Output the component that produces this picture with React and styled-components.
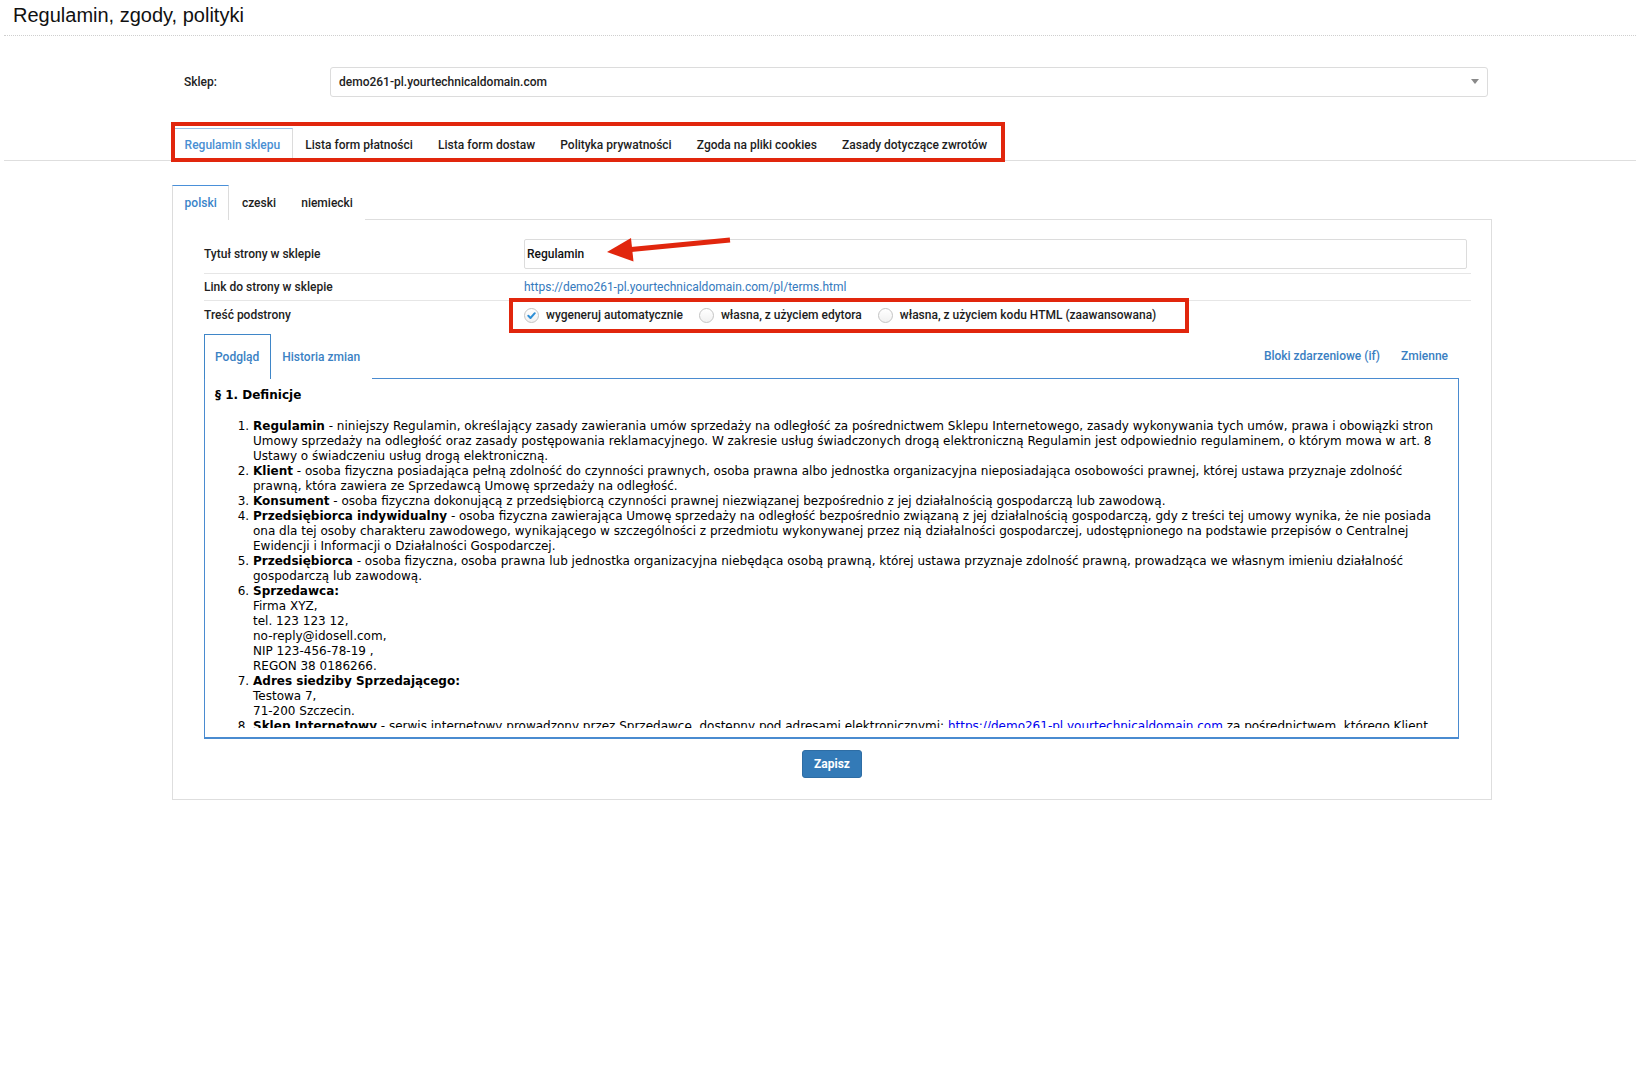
import React from 'react';
import styled, { createGlobalStyle } from 'styled-components';

const GlobalStyle = createGlobalStyle`
  * { box-sizing: border-box; }
  html, body { margin: 0; padding: 0; background: #fff; }
  body {
    font-family: Roboto, "Liberation Sans", Arial, sans-serif;
    font-size: 12px;
    color: #222;
  }
`;

const RED = '#e1260d';

const Page = styled.div`
  padding-left: 4px;
  padding-bottom: 40px;
`;

const Header = styled.header`
  height: 36px;
  border-bottom: 1px dotted #cfcfcf;
  padding-left: 9px;
`;

const Title = styled.h1`
  margin: 0;
  font-family: "Liberation Sans", Arial, sans-serif;
  font-size: 20px;
  font-weight: 400;
  line-height: 30px;
  color: #111;
`;

const Section = styled.div`
  margin-left: 168px;
  width: 1320px;
`;

const ShopRow = styled.div`
  margin-top: 31px;
  height: 30px;
  display: flex;
  align-items: center;
`;

const ShopLabel = styled.div`
  width: 158px;
  padding-left: 12px;
  font-weight: 500;
`;

const Select = styled.div`
  position: relative;
  flex: 1;
  margin-right: 4px;
  height: 30px;
  border: 1px solid #dcdcdc;
  border-radius: 3px;
  display: flex;
  align-items: center;
  padding: 0 8px;
  font-weight: 500;
  color: #222;
`;

const Caret = styled.span`
  position: absolute;
  right: 8px;
  top: 11px;
  width: 0;
  height: 0;
  border-left: 4px solid transparent;
  border-right: 4px solid transparent;
  border-top: 5px solid #8a8a8a;
`;

const MainTabBar = styled.div`
  margin-top: 31px;
  height: 33px;
  border-bottom: 1px solid #dedede;
  padding-left: 168px;
  display: flex;
`;

const TabGroup = styled.div`
  position: relative;
  display: flex;
`;

const RedFrame = styled.div`
  position: absolute;
  border: 4px solid ${RED};
  pointer-events: none;
  z-index: 5;
`;

const MainTab = styled.div`
  height: 33px;
  padding: 0 11.6px;
  display: flex;
  align-items: center;
  font-weight: 500;
  white-space: nowrap;
  color: ${p => (p.$active ? '#4a8fd3' : '#1d1d1d')};
  background: #fff;
  border: 1px solid ${p => (p.$active ? '#dcdcdc' : 'transparent')};
  border-top-color: ${p => (p.$active ? '#9dc0e3' : 'transparent')};
  border-bottom: none;
  position: relative;
  z-index: 1;
`;

const SubTabBar = styled.div`
  margin-top: 24px;
  height: 35px;
  border-bottom: 1px solid #dedede;
  display: flex;
`;

const SubTab = styled.div`
  height: 35px;
  padding: 0 11.6px;
  display: flex;
  align-items: center;
  font-weight: 500;
  color: ${p => (p.$active ? '#3a84c9' : '#1d1d1d')};
  background: #fff;
  border: 1px solid ${p => (p.$active ? '#dcdcdc' : 'transparent')};
  border-top-color: ${p => (p.$active ? '#4a90d9' : 'transparent')};
  border-bottom: none;
  margin-bottom: -1px;
  position: relative;
  z-index: 1;
`;

const Panel = styled.div`
  border: 1px solid #dedede;
  border-top: none;
  padding: 14px 0 21px;
`;

const FormArea = styled.div`
  padding: 0 20px 0 31px;
`;

const FormRow = styled.div`
  display: grid;
  grid-template-columns: 320px 1fr;
  align-items: center;
  border-bottom: ${p => (p.$last ? 'none' : '1px solid #e6e6e6')};
  padding: ${p => p.$pad};
`;

const FieldLabel = styled.div`
  font-weight: 500;
  color: #222;
  line-height: 14px;
`;

const Cell = styled.div`
  position: relative;
  line-height: 14px;
`;

const TextInput = styled.div`
  height: 30px;
  border: 1px solid #dcdcdc;
  border-radius: 2px;
  display: flex;
  align-items: center;
  padding-left: 2px;
  font-weight: 500;
  color: #111;
`;

const Arrow = styled.svg`
  position: absolute;
  left: 80px;
  top: -5px;
  overflow: visible;
  z-index: 5;
`;

const UrlLink = styled.a`
  color: #3479bd;
  text-decoration: none;
`;

const RadioGroup = styled.div`
  display: flex;
  align-items: center;
  height: 16px;
`;

const RadioItem = styled.label`
  display: flex;
  align-items: center;
  margin-right: 16px;
  font-weight: 500;
  color: #1d1d1d;
  white-space: nowrap;
`;

const Circle = styled.span`
  width: 15px;
  height: 15px;
  border-radius: 50%;
  border: 1px solid #c4c4c4;
  background: linear-gradient(#ffffff, #f1f1f1);
  margin-right: 7px;
  display: inline-flex;
  align-items: center;
  justify-content: center;
  flex: none;
`;

const Editor = styled.div`
  margin-right: 12px;
`;

const EditorTabs = styled.div`
  display: flex;
  align-items: flex-end;
  height: 45px;
`;

const EditorTab = styled.div`
  height: 45px;
  padding: 0 11px 0 10px;
  display: flex;
  align-items: center;
  font-weight: 500;
  color: #3b82c4;
  background: #fff;
  border: 1px solid ${p => (p.$active ? '#3f86c8' : 'transparent')};
  border-bottom: none;
  margin-bottom: -1px;
  position: relative;
  z-index: 1;
`;

const EditorLinks = styled.div`
  margin-left: auto;
  align-self: center;
  padding: 1px 11px 0 0;
  display: flex;
  gap: 21px;
  font-weight: 500;
  color: #3b7fc2;
`;

const Preview = styled.div`
  height: 361px;
  border: 1px solid #4a8bd0;
  border-bottom-width: 2px;
  padding-bottom: 9px;
`;

const PreviewScroll = styled.div`
  height: 100%;
  overflow: hidden;
  padding: 9px 10px 0;
  font-family: "DejaVu Sans", Verdana, sans-serif;
  font-size: 12px;
  line-height: 15px;
  color: #000;
`;

const Heading = styled.p`
  margin: 0 0 16px;
  font-weight: 700;
`;

const List = styled.ol`
  margin: 0;
  padding-left: 38px;
`;

const Term = styled.b`
  font-weight: 700;
`;

const InlineLink = styled.a`
  color: #0000ee;
  text-decoration: underline;
`;

const SaveRow = styled.div`
  display: flex;
  justify-content: center;
  margin-top: 11px;
`;

const SaveButton = styled.button`
  height: 28px;
  padding: 0 11px;
  background: #337ab7;
  border: 1px solid #2e6da4;
  border-radius: 3px;
  color: #fff;
  font-family: Roboto, "Liberation Sans", Arial, sans-serif;
  font-size: 12px;
  font-weight: 700;
`;

const Check = () => (
  <svg width="11" height="11" viewBox="0 0 11 11">
    <path d="M2.3 5.8 L4.5 8 L8.8 3.2" fill="none" stroke="#2f8fd6" strokeWidth="2" strokeLinecap="round" strokeLinejoin="round" />
  </svg>
);

const Radio = ({ checked, children }) => (
  <RadioItem>
    <Circle>{checked && <Check />}</Circle>
    {children}
  </RadioItem>
);

const mainTabs = [
  'Regulamin sklepu',
  'Lista form płatności',
  'Lista form dostaw',
  'Polityka prywatności',
  'Zgoda na pliki cookies',
  'Zasady dotyczące zwrotów',
];

export default function App() {
  return (
    <>
      <GlobalStyle />
      <Page>
        <Header>
          <Title>Regulamin, zgody, polityki</Title>
        </Header>

        <Section>
          <ShopRow>
            <ShopLabel>Sklep:</ShopLabel>
            <Select>
              demo261-pl.yourtechnicaldomain.com
              <Caret />
            </Select>
          </ShopRow>
        </Section>

        <MainTabBar>
          <TabGroup>
            {mainTabs.map((t, i) => (
              <MainTab key={t} $active={i === 0}>{t}</MainTab>
            ))}
            <RedFrame style={{ top: -6, left: -1, right: -5, bottom: -2 }} />
          </TabGroup>
        </MainTabBar>

        <Section>
          <SubTabBar>
            <SubTab $active>polski</SubTab>
            <SubTab>czeski</SubTab>
            <SubTab>niemiecki</SubTab>
          </SubTabBar>

          <Panel>
            <FormArea>
              <FormRow $pad="5px 4px 4px 0">
                <FieldLabel>Tytuł strony w sklepie</FieldLabel>
                <Cell>
                  <TextInput>Regulamin</TextInput>
                  <Arrow width="130" height="30" viewBox="0 0 130 30">
                    <line x1="27" y1="15.6" x2="126" y2="6" stroke={RED} strokeWidth="5" />
                    <polygon points="3,18 29.5,27.5 27,4" fill={RED} />
                  </Arrow>
                </Cell>
              </FormRow>

              <FormRow $pad="6px 0">
                <FieldLabel>Link do strony w sklepie</FieldLabel>
                <Cell>
                  <UrlLink href="#">https://demo261-pl.yourtechnicaldomain.com/pl/terms.html</UrlLink>
                </Cell>
              </FormRow>

              <FormRow $pad="6px 0 10px" $last>
                <FieldLabel>Treść podstrony</FieldLabel>
                <Cell>
                  <RadioGroup>
                    <Radio checked>wygeneruj automatycznie</Radio>
                    <Radio>własna, z użyciem edytora</Radio>
                    <Radio>własna, z użyciem kodu HTML (zaawansowana)</Radio>
                  </RadioGroup>
                  <RedFrame style={{ left: -15, top: -9, width: 680, height: 35 }} />
                </Cell>
              </FormRow>

              <Editor>
                <EditorTabs>
                  <EditorTab $active>Podgląd</EditorTab>
                  <EditorTab>Historia zmian</EditorTab>
                  <EditorLinks>
                    <span>Bloki zdarzeniowe (if)</span>
                    <span>Zmienne</span>
                  </EditorLinks>
                </EditorTabs>
                <Preview>
                  <PreviewScroll>
                    <Heading>§ 1. Definicje</Heading>
                    <List>
                      <li>
                        <Term>Regulamin</Term> - niniejszy Regulamin, określający zasady zawierania umów sprzedaży na odległość za pośrednictwem Sklepu Internetowego, zasady wykonywania tych umów, prawa i obowiązki stron Umowy sprzedaży na odległość oraz zasady postępowania reklamacyjnego. W zakresie usług świadczonych drogą elektroniczną Regulamin jest odpowiednio regulaminem, o którym mowa w art. 8 Ustawy o świadczeniu usług drogą elektroniczną.
                      </li>
                      <li>
                        <Term>Klient</Term> - osoba fizyczna posiadająca pełną zdolność do czynności prawnych, osoba prawna albo jednostka organizacyjna nieposiadająca osobowości prawnej, której ustawa przyznaje zdolność prawną, która zawiera ze Sprzedawcą Umowę sprzedaży na odległość.
                      </li>
                      <li>
                        <Term>Konsument</Term> - osoba fizyczna dokonującą z przedsiębiorcą czynności prawnej niezwiązanej bezpośrednio z jej działalnością gospodarczą lub zawodową.
                      </li>
                      <li>
                        <Term>Przedsiębiorca indywidualny</Term> - osoba fizyczna zawierająca Umowę sprzedaży na odległość bezpośrednio związaną z jej działalnością gospodarczą, gdy z treści tej umowy wynika, że nie posiada ona dla tej osoby charakteru zawodowego, wynikającego w szczególności z przedmiotu wykonywanej przez nią działalności gospodarczej, udostępnionego na podstawie przepisów o Centralnej Ewidencji i Informacji o Działalności Gospodarczej.
                      </li>
                      <li>
                        <Term>Przedsiębiorca</Term> - osoba fizyczna, osoba prawna lub jednostka organizacyjna niebędąca osobą prawną, której ustawa przyznaje zdolność prawną, prowadząca we własnym imieniu działalność gospodarczą lub zawodową.
                      </li>
                      <li>
                        <Term>Sprzedawca:</Term><br />
                        Firma XYZ,<br />
                        tel. 123 123 12,<br />
                        no-reply@idosell.com,<br />
                        NIP 123-456-78-19 ,<br />
                        REGON 38 0186266.
                      </li>
                      <li>
                        <Term>Adres siedziby Sprzedającego:</Term><br />
                        Testowa 7,<br />
                        71-200 Szczecin.
                      </li>
                      <li>
                        <Term>Sklep Internetowy</Term> - serwis internetowy prowadzony przez Sprzedawcę, dostępny pod adresami elektronicznymi: <InlineLink href="#">https://demo261-pl.yourtechnicaldomain.com</InlineLink> za pośrednictwem, którego Klient może zawrzeć Umowę sprzedaży na odległość.
                      </li>
                    </List>
                  </PreviewScroll>
                </Preview>
              </Editor>
            </FormArea>

            <SaveRow>
              <SaveButton>Zapisz</SaveButton>
            </SaveRow>
          </Panel>
        </Section>
      </Page>
    </>
  );
}
